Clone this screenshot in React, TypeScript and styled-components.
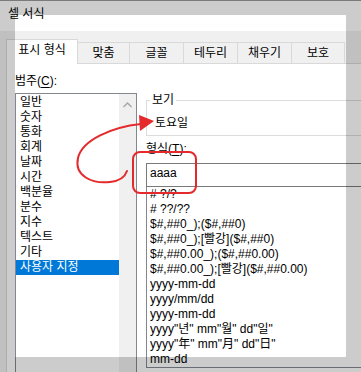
import styled, { createGlobalStyle } from 'styled-components';

const GlobalStyle = createGlobalStyle`
  body {
    margin: 0;
    font-family: "Liberation Sans", "Noto Sans CJK KR", sans-serif;
    font-size: 12px;
    color: #000;
  }
`;

const Window = styled.div`
  position: relative;
  width: 361px;
  height: 372px;
  overflow: hidden;
  background: #f0f0f0;
`;

const TitleBar = styled.div`
  height: 31px;
  box-sizing: border-box;
  border-top: 1px solid #9a9a9a;
  background: #fff;
  padding: 6px 0 0 8px;
  line-height: 15px;
`;

const Body = styled.div`
  padding: 8px 0 0 6px;
`;

const TabRow = styled.div`
  display: flex;
  align-items: flex-end;
  height: 24px;
`;

const Tab = styled.div<{ $active?: boolean; $w: number }>`
  position: relative;
  z-index: ${({ $active }) => ($active ? 2 : 1)};
  box-sizing: border-box;
  width: ${({ $w }) => $w}px;
  height: ${({ $active }) => ($active ? 25 : 21)}px;
  margin-bottom: ${({ $active }) => ($active ? -1 : 0)}px;
  margin-left: -1px;
  border: 1px solid #d9d9d9;
  border-bottom: none;
  background: ${({ $active }) => ($active ? '#fff' : '#f0f0f0')};
  display: flex;
  align-items: center;
  justify-content: center;
  line-height: 15px;
  padding-bottom: ${({ $active }) => ($active ? 3 : 0)}px;

  &:first-child {
    margin-left: 0;
  }
`;

const Panel = styled.div`
  position: relative;
  width: 400px;
  height: 330px;
  box-sizing: border-box;
  border: 1px solid #d9d9d9;
  background: #fff;
  display: flex;
  padding: 10px 0 0 8px;
`;

const LeftColumn = styled.div`
  width: 122px;
  flex-shrink: 0;
`;

const RightColumn = styled.div`
  margin-left: 9px;
  width: 240px;
  flex-shrink: 0;
`;

const Label = styled.div`
  line-height: 15px;
  height: 15px;

  u {
    text-decoration: underline;
    text-underline-offset: 2px;
  }
`;

const CategoryBox = styled.div`
  margin-top: 4px;
  width: 122px;
  height: 300px;
  box-sizing: border-box;
  border: 1px solid #828790;
  display: flex;
  padding-top: 1px;
`;

const CategoryItems = styled.div`
  width: 103px;
`;

const Item = styled.div<{ $selected?: boolean }>`
  height: 15px;
  line-height: 15px;
  padding-left: 4px;
  white-space: nowrap;
  background: ${({ $selected }) => ($selected ? '#0078d7' : 'transparent')};
  color: ${({ $selected }) => ($selected ? '#fff' : '#000')};
`;

const ScrollTrack = styled.div`
  width: 17px;
  margin-top: -1px;
  background: #f0f0f0;
  display: flex;
  justify-content: center;
  padding-top: 8px;
  box-sizing: border-box;
`;

const PreviewGroup = styled.fieldset`
  margin: 19px 0 0;
  padding: 0;
  border: 1px solid #dcdcdc;
  min-width: 0;
`;

const Legend = styled.legend`
  margin-left: 3px;
  padding: 0 2px;
  line-height: 15px;
`;

const PreviewText = styled.div`
  padding: 8px 0 4px 8px;
  line-height: 15px;
`;

const FormatLabel = styled(Label)`
  margin-top: 6px;
`;

const FormatInput = styled.div`
  margin-top: 6px;
  height: 24px;
  box-sizing: border-box;
  border: 1px solid #7a7a7a;
  padding: 0 3px;
  line-height: 18px;
`;

const FormatList = styled.div`
  height: 181px;
  box-sizing: border-box;
  border: 1px solid #828790;
  border-top: none;
  overflow: hidden;
`;

const FormatRow = styled.div`
  height: 15px;
  line-height: 15px;
  padding-left: 3px;
  white-space: nowrap;
`;

const Spotlight = styled.div`
  position: absolute;
  left: 15px;
  top: 15px;
  width: 331px;
  height: 342px;
  box-shadow: 0 0 0 600px rgba(0, 0, 0, 0.2);
  pointer-events: none;
  z-index: 5;
`;

const Annotation = styled.svg`
  position: absolute;
  left: 0;
  top: 0;
  z-index: 6;
  pointer-events: none;
`;

const tabs = [
  { label: '표시 형식', w: 72, active: true },
  { label: '맞춤', w: 53 },
  { label: '글꼴', w: 55 },
  { label: '테두리', w: 55 },
  { label: '채우기', w: 55 },
  { label: '보호', w: 54 },
];

const categories = ['일반', '숫자', '통화', '회계', '날짜', '시간', '백분율', '분수', '지수', '텍스트', '기타', '사용자 지정'];

const formats = [
  '# ?/?',
  '# ??/??',
  '$#,##0_);($#,##0)',
  '$#,##0_);[빨강]($#,##0)',
  '$#,##0.00_);($#,##0.00)',
  '$#,##0.00_);[빨강]($#,##0.00)',
  'yyyy-mm-dd',
  'yyyy/mm/dd',
  'yyyy-mm-dd',
  'yyyy"년" mm"월" dd"일"',
  'yyyy"年" mm"月" dd"日"',
  'mm-dd',
];

const RED = '#e42a2c';

export default function App() {
  return (
    <>
      <GlobalStyle />
      <Window>
        <TitleBar>셀 서식</TitleBar>
        <Body>
          <TabRow>
            {tabs.map((t) => (
              <Tab key={t.label} $w={t.w} $active={t.active}>
                {t.label}
              </Tab>
            ))}
          </TabRow>
          <Panel>
            <LeftColumn>
              <Label>
                범주(<u>C</u>):
              </Label>
              <CategoryBox>
                <CategoryItems>
                  {categories.map((c) => (
                    <Item key={c} $selected={c === '사용자 지정'}>
                      {c}
                    </Item>
                  ))}
                </CategoryItems>
                <ScrollTrack>
                  <svg width="9" height="6" viewBox="0 0 9 6">
                    <polyline points="0.5,5 4.5,1 8.5,5" fill="none" stroke="#a6a6a6" strokeWidth="1.4" />
                  </svg>
                </ScrollTrack>
              </CategoryBox>
            </LeftColumn>
            <RightColumn>
              <PreviewGroup>
                <Legend>보기</Legend>
                <PreviewText>토요일</PreviewText>
              </PreviewGroup>
              <FormatLabel>
                형식(<u>T</u>):
              </FormatLabel>
              <FormatInput>aaaa</FormatInput>
              <FormatList>
                {formats.map((f, i) => (
                  <FormatRow key={i}>{f}</FormatRow>
                ))}
              </FormatList>
            </RightColumn>
          </Panel>
        </Body>
        <Spotlight />
        <Annotation width="361" height="372" viewBox="0 0 361 372">
          <rect x="133" y="152" width="63" height="41" rx="7" fill="none" stroke={RED} strokeWidth="2" />
          <path
            d="M141 124 C112 127, 82 140, 78 158 C74 176, 92 184, 110 182 C120 181, 125 177, 127 171"
            fill="none"
            stroke={RED}
            strokeWidth="2"
            strokeLinecap="round"
          />
          <polygon points="139,115 154,121 140,131" fill={RED} />
        </Annotation>
      </Window>
    </>
  );
}
